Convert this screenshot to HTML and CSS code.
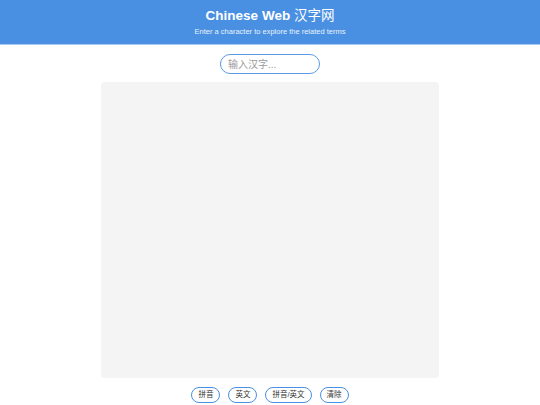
FILE: index.html
```html
<!DOCTYPE html>
<html lang="zh">
<head>
<meta charset="utf-8">
<title>Chinese Web 汉字网</title>
<link rel="stylesheet" href="styles.css">
</head>
<body>
<header class="site-header">
  <h1 class="title">Chinese Web <span class="title-cjk">汉字网</span></h1>
  <p class="subtitle">Enter a character to explore the related terms</p>
</header>
<main class="content">
  <div class="search-row">
    <input class="search-input" type="text" placeholder="输入汉字...">
  </div>
  <div class="canvas"></div>
  <div class="controls">
    <button class="ctrl-btn">拼音</button>
    <button class="ctrl-btn">英文</button>
    <button class="ctrl-btn">拼音/英文</button>
    <button class="ctrl-btn">清除</button>
  </div>
</main>
</body>
</html>
```
FILE: styles.css
```css
html, body {
  margin: 0;
  padding: 0;
  background: #ffffff;
  font-family: "Liberation Sans", Arial, "Noto Sans CJK SC", sans-serif;
}

.site-header {
  background: #4a90e2;
  color: #ffffff;
  text-align: center;
  height: 45px;
  box-sizing: border-box;
  padding-top: 8px;
  border-bottom: 1px solid #a8c9f0;
}

.title {
  margin: 0;
  font-size: 13.5px;
  line-height: 16px;
  font-weight: bold;
}

.title-cjk {
  font-weight: normal;
}

.subtitle {
  margin: 3px 0 0;
  font-size: 7.5px;
  line-height: 10px;
  color: #e6f0fb;
}

.content {
  display: flex;
  flex-direction: column;
  align-items: center;
}

.search-row {
  margin-top: 9px;
  display: flex;
  justify-content: center;
}

.search-input {
  width: 100px;
  height: 20px;
  box-sizing: border-box;
  border: 1px solid #5b9be6;
  border-radius: 10px;
  padding: 0 7px;
  font-size: 10px;
  font-family: "Liberation Sans", Arial, "Noto Sans CJK SC", sans-serif;
  color: #333;
  outline: none;
  background: #fff;
}

.search-input::placeholder {
  color: #9a9a9a;
}

.canvas {
  margin-top: 8px;
  width: 338px;
  height: 296px;
  background: #f4f4f4;
  border-radius: 4px;
}

.controls {
  margin-top: 9px;
  display: flex;
  gap: 8px;
  justify-content: center;
}

.ctrl-btn {
  height: 16px;
  box-sizing: border-box;
  padding: 0 6px;
  border: 1px solid #4a90e2;
  border-radius: 8px;
  background: #ffffff;
  color: #333333;
  font-size: 7.5px;
  line-height: 14px;
  font-family: "Liberation Sans", Arial, "Noto Sans CJK SC", sans-serif;
  cursor: pointer;
}
```
